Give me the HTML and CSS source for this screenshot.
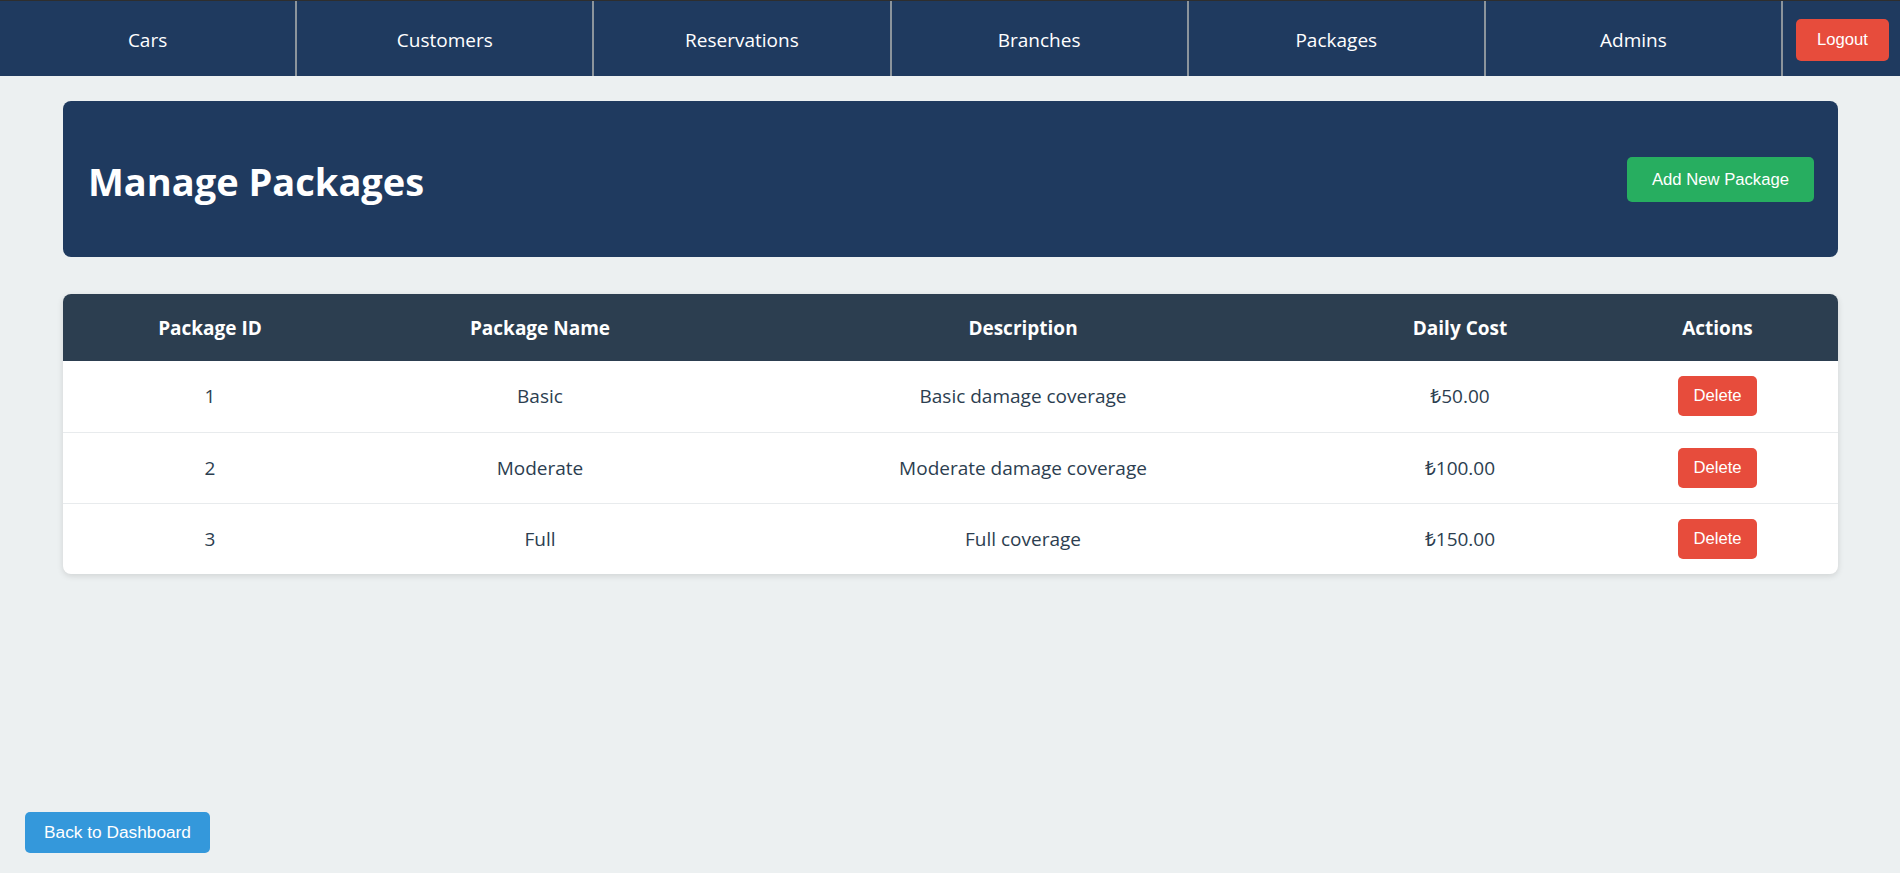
FILE: index.html
```html
<!DOCTYPE html>
<html lang="en">
<head>
<meta charset="utf-8">
<title>Manage Packages</title>
<link rel="stylesheet" href="styles.css">
</head>
<body>
<nav class="navbar">
  <a class="nav-link" href="#">Cars</a>
  <a class="nav-link" href="#">Customers</a>
  <a class="nav-link" href="#">Reservations</a>
  <a class="nav-link" href="#">Branches</a>
  <a class="nav-link" href="#">Packages</a>
  <a class="nav-link" href="#">Admins</a>
  <button class="btn btn-logout">Logout</button>
</nav>

<main class="container">
  <section class="page-header">
    <h1 class="page-title">Manage Packages</h1>
    <button class="btn btn-add">Add New Package</button>
  </section>

  <section class="table-card">
    <table class="data-table">
      <thead>
        <tr>
          <th class="col-id">Package ID</th>
          <th class="col-name">Package Name</th>
          <th class="col-desc">Description</th>
          <th class="col-cost">Daily Cost</th>
          <th class="col-actions">Actions</th>
        </tr>
      </thead>
      <tbody>
        <tr>
          <td>1</td>
          <td>Basic</td>
          <td>Basic damage coverage</td>
          <td>₺50.00</td>
          <td><button class="btn btn-delete">Delete</button></td>
        </tr>
        <tr>
          <td>2</td>
          <td>Moderate</td>
          <td>Moderate damage coverage</td>
          <td>₺100.00</td>
          <td><button class="btn btn-delete">Delete</button></td>
        </tr>
        <tr>
          <td>3</td>
          <td>Full</td>
          <td>Full coverage</td>
          <td>₺150.00</td>
          <td><button class="btn btn-delete">Delete</button></td>
        </tr>
      </tbody>
    </table>
  </section>
</main>

<button class="btn btn-back">Back to Dashboard</button>
</body>
</html>
```

FILE: styles.css
```css
* {
  box-sizing: border-box;
}

html, body {
  margin: 0;
  padding: 0;
}

body {
  background: #ecf0f1;
  font-family: "Open Sans", "Noto Sans", "DejaVu Sans", sans-serif;
  color: #2c3e50;
  min-height: 873px;
}

.navbar {
  display: flex;
  align-items: center;
  height: 76px;
  background: #1f3a5f;
  border-top: 1px solid #2e2e2e;
}

.nav-link {
  flex: 1;
  height: 100%;
  display: flex;
  align-items: center;
  justify-content: center;
  color: #ffffff;
  text-decoration: none;
  font-size: 19px;
  border-right: 2px solid #8b949c;
  padding-top: 2px;
}

.btn {
  font-family: "Liberation Sans", Arial, sans-serif;
  font-size: 16.67px;
  color: #ffffff;
  border: none;
  border-radius: 5px;
  cursor: pointer;
  line-height: 19px;
}

.btn-logout {
  background: #e74c3c;
  padding: 11px 21px 12px;
  margin: 2px 11px 0 13px;
}

.container {
  padding: 25px 62px 25px 63px;
}

.page-header {
  display: flex;
  align-items: center;
  justify-content: space-between;
  background: #1f3a5f;
  border-radius: 8px;
  height: 156px;
  padding: 0 24px 0 25px;
}

.page-title {
  margin: 0;
  color: #ffffff;
  font-size: 38px;
  font-weight: 700;
  padding-top: 4px;
}

.btn-add {
  background: #27ae60;
  padding: 13px 25px;
}

.table-card {
  margin-top: 37px;
  background: #ffffff;
  border-radius: 8px;
  overflow: hidden;
  box-shadow: 0 2px 6px rgba(0, 0, 0, 0.12);
}

.data-table {
  width: 100%;
  border-collapse: collapse;
  table-layout: fixed;
}

.data-table th {
  background: #2c3e50;
  color: #ffffff;
  font-weight: 700;
  font-size: 19px;
  height: 67px;
  padding: 0 10px;
  text-align: center;
}

.col-id { width: 294px; }
.col-name { width: 366px; }
.col-desc { width: 600px; }
.col-cost { width: 274px; }
.col-actions { width: 241px; }

.data-table td {
  font-size: 19px;
  color: #2c3e50;
  text-align: center;
  height: 71px;
  padding: 0 10px;
  border-bottom: 1px solid #e8ebed;
}

.data-table tbody tr:last-child td {
  border-bottom: none;
}

.btn-delete {
  background: #e74c3c;
  padding: 10px 15px 11px;
}

.btn-back {
  position: fixed;
  left: 25px;
  bottom: 20px;
  background: #3498db;
  font-size: 17.3px;
  padding: 11px 19px;
}
```
